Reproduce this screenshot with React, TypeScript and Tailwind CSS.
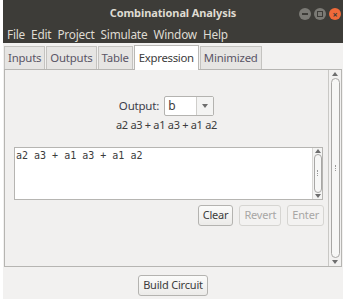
import React from "react";

const ui = { fontFamily: '"Noto Sans", "Open Sans", sans-serif' };

const Tab = ({ label, active }: { label: string; active?: boolean }) =>
  active ? (
    <div className="h-[25px] px-[4px] flex items-center bg-white border border-b-0 border-[#b9b8b5] text-[11.4px] tracking-[-0.3px] text-[#3c3c3c] -mb-px z-10">
      {label}
    </div>
  ) : (
    <div className="h-[23px] px-[3px] flex items-center bg-[#e6e5e3] border border-b-0 border-[#c4c3c0] text-[11.4px] tracking-[-0.2px] text-[#5a5566]">
      {label}
    </div>
  );

const Btn = ({ label, disabled }: { label: string; disabled?: boolean }) => (
  <div
    className={
      "h-[21px] px-[4px] flex items-center rounded-[3px] border text-[11px] tracking-[-0.2px] " +
      (disabled
        ? "border-[#d6d5d2] bg-[#f3f2f1] text-[#a8a7a5]"
        : "border-[#b4b3b0] bg-gradient-to-b from-[#fbfbfa] to-[#ecebe9] text-[#3c3c3c]")
    }
  >
    {label}
  </div>
);

const Arrow = ({ up }: { up?: boolean }) => (
  <svg width="6" height="4" viewBox="0 0 6 4">
    <path d={up ? "M0 4 L3 0 L6 4 Z" : "M0 0 L3 4 L6 0 Z"} fill="#6e6e6e" />
  </svg>
);

export default function App() {
  return (
    <div className="w-[346px] h-[303px] bg-white" style={ui}>
      <div className="ml-[3px] w-[340px] h-[299px] bg-[#f2f1f0] flex flex-col">
        {/* title bar */}
        <div className="h-[26px] bg-[#3d3c38] flex items-center relative">
          <div className="flex-1 text-center text-[11px] font-bold text-[#dfdbd2] tracking-[-0.1px]">
            Combinational Analysis
          </div>
          <div className="absolute right-[2px] top-[8px] flex gap-[3px]">
            <div className="w-[12px] h-[12px] rounded-full bg-[#7b7a75] flex items-center justify-center">
              <div className="w-[6px] h-[2px] bg-[#3d3c38]" />
            </div>
            <div className="w-[12px] h-[12px] rounded-full bg-[#7b7a75] flex items-center justify-center">
              <div className="w-[6px] h-[6px] border border-[#3d3c38]" />
            </div>
            <div className="w-[12px] h-[12px] rounded-full bg-[#ef6a3a] flex items-center justify-center text-[9px] leading-none font-bold text-[#3d3c38]">
              ×
            </div>
          </div>
        </div>
        {/* menu bar */}
        <div className="h-[17px] bg-[#3d3c38] flex items-center gap-[6px] pl-[4px] text-[11.8px] tracking-[-0.2px] text-[#dfdbd2]">
          <span>File</span>
          <span>Edit</span>
          <span>Project</span>
          <span>Simulate</span>
          <span>Window</span>
          <span>Help</span>
        </div>
        {/* tabs */}
        <div className="h-[26px] flex items-end pl-[1px] gap-[1px]">
          <Tab label="Inputs" />
          <Tab label="Outputs" />
          <Tab label="Table" />
          <Tab label="Expression" active />
          <Tab label="Minimized" />
        </div>
        {/* panel */}
        <div className="ml-[1px] mr-[1px] h-[198px] border border-[#b6b5b2] flex">
          <div className="flex-1 bg-[#f1f0ef] border-r border-[#c9c8c5] flex flex-col items-center">
            <div className="mt-[26px] flex items-center gap-[5px]">
              <span className="text-[11.5px] tracking-[-0.2px] text-[#3c3c4a]">Output:</span>
              <div className="w-[50px] h-[20px] flex border border-[#b4b3b0] rounded-[2px] bg-white">
                <div className="flex-1 pl-[3px] text-[12px] leading-[18px] text-[#3c3c3c]">b</div>
                <div className="w-[17px] border-l border-[#cfcecb] bg-[#f4f4f3] flex items-center justify-center">
                  <Arrow />
                </div>
              </div>
            </div>
            <div className="mt-[1px] text-[11px] text-[#3c3c3c] tracking-[-0.3px]">a2 a3 + a1 a3 + a1 a2</div>
            <div className="mt-[13px] self-start ml-[9px] w-[309px] h-[53px] flex border border-[#b6b5b2] bg-white">
              <div
                className="flex-1 pl-[1px] pt-[2px] text-[10px] leading-[12px] text-[#3c3c3c]"
                style={{ fontFamily: '"DejaVu Sans Mono", monospace' }}
              >
                a2 a3 + a1 a3 + a1 a2
              </div>
              <div className="w-[10px] flex flex-col items-center bg-[#f4f4f3] border-l border-[#d9d8d5] py-[1px]">
                <Arrow up />
                <div className="flex-1 w-[8px] my-[1px] rounded-[4px] border border-[#a8a7a5] bg-[#f7f7f6] flex items-center justify-center">
                  <div className="w-[1px] h-[6px] border-l border-dotted border-[#999]" />
                </div>
                <Arrow />
              </div>
            </div>
            <div className="mt-[5px] self-end mr-[4px] flex gap-[6px]">
              <Btn label="Clear" />
              <Btn label="Revert" disabled />
              <Btn label="Enter" disabled />
            </div>
          </div>
          <div className="w-[12px] flex flex-col items-center py-[2px] bg-[#f2f1f0]">
            <Arrow up />
            <div className="flex-1 w-[9px] my-[2px] rounded-[5px] border border-[#a8a7a5] bg-[#f7f7f6] flex items-center justify-center">
              <div className="w-[1px] h-[6px] border-l border-dotted border-[#999]" />
            </div>
            <Arrow />
          </div>
        </div>
        {/* bottom */}
        <div className="flex justify-center mt-[8px]">
          <Btn label="Build Circuit" />
        </div>
      </div>
    </div>
  );
}
